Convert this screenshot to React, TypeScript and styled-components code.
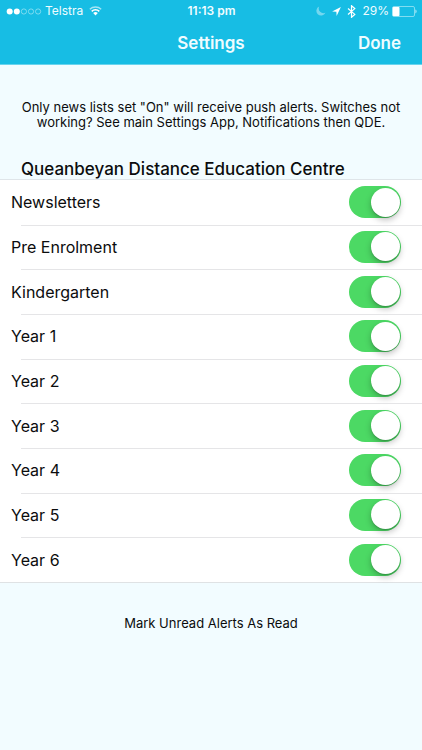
import React, { useState } from "react";
import styled, { createGlobalStyle } from "styled-components";

const GlobalStyle = createGlobalStyle`
  *, *::before, *::after { box-sizing: border-box; }
  body {
    margin: 0;
    background: #f2fcff;
    color: #0b0c0d;
    font-family: Inter, "Liberation Sans", sans-serif;
  }
  button { font: inherit; color: inherit; background: none; border: 0; padding: 0; cursor: pointer; }
`;

const Screen = styled.div`
  min-height: 100vh;
  display: flex;
  flex-direction: column;
`;

const Header = styled.header`
  background: #17bde4;
  color: #effcff;
  border-bottom: 1px solid #68d4ee;
`;

const StatusBar = styled.div`
  display: grid;
  grid-template-columns: 1fr auto 1fr;
  align-items: center;
  height: 22px;
  padding: 0 5px 0 6px;
  font-size: 12px;
  line-height: 22px;
`;

const StatusGroup = styled.div<{ $end?: boolean }>`
  display: flex;
  align-items: center;
  gap: ${(p) => (p.$end ? 6 : 3)}px;
  justify-content: ${(p) => (p.$end ? "flex-end" : "flex-start")};
  svg { display: block; flex: none; }
`;

const BatteryStatus = styled.span`
  display: flex;
  align-items: center;
  gap: 3px;
`;

const Clock = styled.time`
  font-weight: 600;
`;

const Carrier = styled.span`
  margin-right: 3px;
`;

const NavBar = styled.div`
  display: grid;
  grid-template-columns: 1fr auto 1fr;
  align-items: center;
  height: 42px;
  padding: 0 21px;
`;

const Title = styled.h1`
  grid-column: 2;
  margin: 0;
  font-size: 17px;
  line-height: 24px;
  font-weight: 600;
`;

const DoneButton = styled.button`
  && {
    justify-self: end;
    font-size: 17px;
    line-height: 24px;
    font-weight: 600;
  }
`;

const Hint = styled.p`
  margin: 0;
  padding: 35px 16px 0;
  text-align: center;
  font-size: 13px;
  line-height: 15px;
`;

const SectionTitle = styled.h2`
  margin: 0;
  padding: 29px 21px 0;
  font-size: 17px;
  line-height: 20px;
  font-weight: 500;
`;

const List = styled.ul`
  display: grid;
  grid-auto-rows: 1fr;
  min-height: 404px;
  margin: 0;
  padding: 0;
  list-style: none;
  background: #fff;
  border-top: 1px solid #dfe5e9;
  border-bottom: 1px solid #dfe2e4;
`;

const Row = styled.li`
  & + & {
    background: linear-gradient(#e5e5e7, #e5e5e7) 21px 0 / 100% 1px no-repeat;
  }
`;

const RowLabel = styled.label`
  display: flex;
  align-items: center;
  justify-content: space-between;
  height: 100%;
  padding: 0 21px 0 11px;
  font-size: 16px;
  line-height: 24px;
  cursor: pointer;
`;

const Switch = styled.input`
  appearance: none;
  flex: none;
  display: flex;
  align-items: center;
  width: 52px;
  height: 32px;
  margin: 0;
  padding: 0 1px;
  border-radius: 16px;
  background: #e5e5ea;
  cursor: pointer;

  &::before {
    content: "";
    width: 29px;
    height: 29px;
    border-radius: 50%;
    background: #fff;
    box-shadow: 0 3px 6px rgba(0, 0, 0, 0.25), 0 1px 1px rgba(0, 0, 0, 0.15);
  }

  &:checked {
    justify-content: flex-end;
    background: #4cd964;
  }
`;

const MarkRead = styled.button`
  && {
    align-self: center;
    margin: 31px 0;
    font-size: 13px;
    line-height: 18px;
  }
`;

const SignalDots = () => (
  <svg width="36" height="7" viewBox="0 0 36 7" role="img" aria-label="Signal strength 2 of 5">
    {[0, 1, 2, 3, 4].map((i) => (
      <circle
        key={i}
        cx={3.7 + i * 7.1}
        cy="3.5"
        r={i < 2 ? 3 : 2.6}
        fill={i < 2 ? "#fff" : "none"}
        stroke={i < 2 ? "none" : "#a5e6f5"}
        strokeWidth="0.7"
      />
    ))}
  </svg>
);

const WifiIcon = () => (
  <svg width="13" height="10" viewBox="0 0 13 10" role="img" aria-label="Wi-Fi" fill="none">
    <path d="M.8 3.3a8.2 8.2 0 0 1 11.4 0" stroke="#a4e5f5" strokeWidth="1.3" />
    <path d="M2.7 5.4a5.4 5.4 0 0 1 7.6 0" stroke="#fff" strokeWidth="1.5" />
    <path d="M4.2 7.1a3.2 3.2 0 0 1 4.6 0L6.5 9.5z" fill="#fff" />
  </svg>
);

const MoonIcon = () => (
  <svg width="10" height="10" viewBox="0 0 10 10" role="img" aria-label="Do not disturb">
    <path d="M3.2.6A4.7 4.7 0 1 0 9.4 6.8 4.7 4.7 0 0 1 3.2.6z" fill="#74d7ef" />
  </svg>
);

const LocationIcon = () => (
  <svg width="9" height="9" viewBox="0 0 9 9" role="img" aria-label="Location in use">
    <path d="M8.9.1.1 4.5l4.3.2.2 4.2z" fill="#fff" />
  </svg>
);

const BluetoothIcon = () => (
  <svg width="9" height="13" viewBox="0 0 9 13" role="img" aria-label="Bluetooth">
    <path d="M1 3.5l6.8 5.9-3.3 2.9V.7l3.3 2.9L1 9.5" fill="none" stroke="#fff" strokeWidth="1.2" />
  </svg>
);

const BatteryIcon = () => (
  <svg width="25" height="11" viewBox="0 0 25 11" role="img" aria-label="Battery">
    <rect x="0.5" y="0.5" width="22" height="10" rx="1.5" fill="none" stroke="#9de4f4" strokeWidth="0.8" />
    <rect x="0.7" y="0.9" width="6.8" height="9.2" rx="0.8" fill="#fff" />
    <path d="M23.5 3.6c1.3.3 1.3 3.5 0 3.8z" fill="#d5f4fb" />
  </svg>
);

const lists = [
  "Newsletters",
  "Pre Enrolment",
  "Kindergarten",
  "Year 1",
  "Year 2",
  "Year 3",
  "Year 4",
  "Year 5",
  "Year 6",
];

export default function App() {
  const [off, setOff] = useState<string[]>([]);
  const toggle = (name: string) =>
    setOff((prev) => (prev.includes(name) ? prev.filter((n) => n !== name) : [...prev, name]));

  return (
    <>
      <GlobalStyle />
      <Screen>
        <Header>
          <StatusBar>
            <StatusGroup>
              <SignalDots />
              <Carrier>Telstra</Carrier>
              <WifiIcon />
            </StatusGroup>
            <Clock>11:13 pm</Clock>
            <StatusGroup $end>
              <MoonIcon />
              <LocationIcon />
              <BluetoothIcon />
              <BatteryStatus>
                29%
                <BatteryIcon />
              </BatteryStatus>
            </StatusGroup>
          </StatusBar>
          <NavBar>
            <Title>Settings</Title>
            <DoneButton type="button">Done</DoneButton>
          </NavBar>
        </Header>
        <Hint>
          Only news lists set "On" will receive push alerts. Switches not working? See main
          Settings App, Notifications then QDE.
        </Hint>
        <SectionTitle>Queanbeyan Distance Education Centre</SectionTitle>
        <List>
          {lists.map((name) => (
            <Row key={name}>
              <RowLabel>
                {name}
                <Switch
                  type="checkbox"
                  role="switch"
                  checked={!off.includes(name)}
                  onChange={() => toggle(name)}
                />
              </RowLabel>
            </Row>
          ))}
        </List>
        <MarkRead type="button">Mark Unread Alerts As Read</MarkRead>
      </Screen>
    </>
  );
}
